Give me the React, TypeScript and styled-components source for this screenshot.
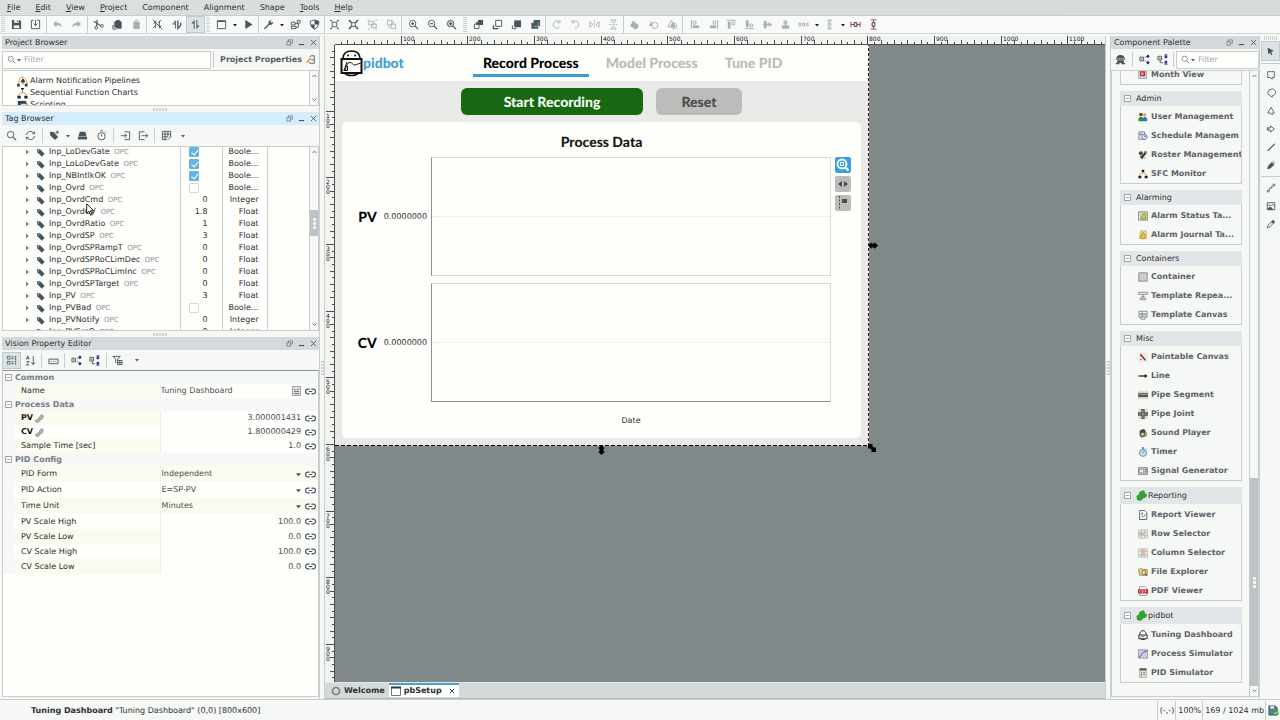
import React, { useLayoutEffect, useRef, useState } from "react";
import styled, { createGlobalStyle, css } from "styled-components";

const ink = "#46565f";
const faded = "#a8aeb1";
const line = "#c9cdce";
const paper = "#f6f8f6";
const white = "#fefefb";

const GlobalStyle = createGlobalStyle`
  * { box-sizing: border-box; }
  body {
    margin: 0;
    background: ${paper};
    color: #2c3033;
    font: 8px/12px "DejaVu Sans", sans-serif;
    text-rendering: geometricPrecision;
  }
  button, input, select { font: inherit; color: inherit; text-rendering: inherit; }
  button { border: 0; padding: 0; background: none; }
  svg { display: block; flex: none; }
  ul { margin: 0; padding: 0; list-style: none; }
`;

/* ---------- icons ---------- */

const glyphs: Record<string, React.ReactNode> = {
  save: <><path d="M1 1h8.500L11 2.500V11H1z" fill="currentColor" stroke="none" /><path d="M3.500 1h5v3.200h-5z" fill="#f6f8f6" stroke="none" /><path d="M3 7h6v3H3z" fill="#f6f8f6" stroke="none" /><path d="M7 1.500v2" /></>,
  pull: <path d="M4 1.500H1.500v9h9v-9H8M6 1v6M4 5l2 2.200L8 5" />,
  undo: <path d="M5 2L1 5.500 5 9V6.800c3-.2 4.800.4 6 2.700C10.700 6 8.500 4.300 5 4.200z" fill="currentColor" stroke="none" />,
  redo: <path d="M7 2l4 3.500L7 9V6.800C4 6.600 2.200 7.200 1 9.500 1.300 6 3.500 4.300 7 4.200z" fill="currentColor" stroke="none" />,
  cut: <><path d="M1 2.500l7.500 5M4.500 1L4 8" strokeWidth="1.300" /><circle cx="3.500" cy="9.500" r="1.500" /><circle cx="9.700" cy="7.500" r="1.500" /></>,
  copy: <><path d="M4 3l1-1.500h3L9 3h1v7H6L3 8V3z" fill="currentColor" /><path d="M1 7v4h4M1 7l3 3" /></>,
  paste: <><path d="M2.500 3h7v8h-7z" fill="currentColor" stroke="none" /><path d="M4.500 2.500V1.300h3v1.200" /></>,
  commOff: <path d="M4 2v8M4 2L2 5M8 10V2M8 10l2-3M1 1l10 10M1 10l3-3M7 4l3-3" />,
  commRead: <><path d="M5 10.500V2L2 5.500h3" /><path d="M7.500 1.500v9l3-3.500V4" strokeWidth="1.400" /></>,
  commFull: <path d="M5 11V1L1.500 5H4v6zM7 1v10l3.500-4H8V1z" fill="currentColor" stroke="none" />,
  frame: <><path d="M1.500 2h9v8.500h-9z" /><path d="M1.500 2.500h9" strokeWidth="1.500" /></>,
  play: <path d="M2.500 1l8 5-8 5z" fill="currentColor" stroke="none" />,
  wrench: <path d="M1 10.300l5-5C5.500 3 7 1 9.500 1.300L8 3l1 1.200L11 3c.2 2.500-1.800 4-4 3.400l-4.800 4.900z" fill="currentColor" stroke="none" />,
  nodes: <path d="M1.500 3.500h4v3h-4zM1.500 8h5v2.500h-5zM8 1.500h3v3H8zM5.500 5h3V4.500M6.500 9H9V5" />,
  shield: <><path d="M6 1l4.700 1.500c0 4-1 6.800-4.700 8.700C2.300 9.300 1.300 6.500 1.300 2.500z" /><path d="M6 1l4.700 1.500c0 1.500 0 2.500-.5 3.500H6zM6 6v5.200C4 10 2.500 8.500 2 6z" fill="currentColor" stroke="none" /></>,
  groupA: <><path d="M3.500 3.500h5v5h-5z" /><path d="M1 1.500h2v1.500M11 1.500H9V3M1 10.500h2V9M11 10.500H9V9" /></>,
  groupB: <><path d="M4 4h4v4H4z" /><path d="M1 1l3 3M11 1L8 4M1 11l3-3M11 11L8 8" strokeWidth="1.600" /></>,
  groupC: <><path d="M2 2.500h5.500v4H2zM5 5.500h5v4H5z" /><path d="M.5 1h2M9 1h2M1 11h2M9 11h2" /></>,
  groupD: <path d="M1.500 1.500h5v5h-5zM5.500 5.500h5v5h-5zM8 2v2M3 8v2" />,
  zoomIn: <><circle cx="5" cy="5" r="3.500" /><path d="M7.700 7.700L11 11M3.500 5h3M5 3.500v3" strokeWidth="1.300" /></>,
  zoomOut: <><circle cx="5" cy="5" r="3.500" /><path d="M7.700 7.700L11 11M3.500 5h3" strokeWidth="1.300" /></>,
  zoomFit: <><circle cx="5" cy="5" r="3.500" fill="currentColor" fillOpacity=".25" /><path d="M7.700 7.700L11 11M3.500 5h3M5 3.500v3" strokeWidth="1.300" /></>,
  forward: <><path d="M5.500 1h5.500v5.500H5.500z" fill="currentColor" stroke="none" /><path d="M1.500 5.500h5v5h-5z" fill="#f6f8f6" /><path d="M3.500 3h3v3.500h-3z" fill="currentColor" stroke="none" /></>,
  backward: <><path d="M4 1.500h6.500V8H4z" /><path d="M1.500 7v3.500H7" strokeWidth="1.500" /></>,
  front: <><path d="M3.500 1.500H11V9H3.500z" fill="currentColor" stroke="none" /><path d="M1.500 7v3.500H6" /></>,
  back: <><path d="M4 1h7v7H9v2.500H1.500V4H4z" fill="currentColor" stroke="none" /><path d="M4 8h5V3.500" stroke="#dfe3e3" strokeWidth=".6" /></>,
  rotL: <path d="M9.500 8.500A4 4 0 1 1 9.500 3.500M9.800 1v3H7" />,
  rotR: <path d="M2.500 3.500a4 4 0 1 1 3 6.500M2.200 1v3h3" />,
  flipH: <><path d="M1 3l3.500 3L1 9zM11 3L7.500 6 11 9z" /><path d="M6 1v10" strokeDasharray="1.500 1" /></>,
  flipV: <><path d="M3 1l3 3.500L9 1zM3 11l3-3.500L9 11z" /><path d="M1 6h10" strokeDasharray="1.500 1" /></>,
  union: <path d="M4.500 1.500l3 3a3.300 3.300 0 1 1-3.500 4.500L1 8z" fill="currentColor" stroke="none" />,
  diff: <><path d="M4 1.500L1 7.500h3.500z" fill="currentColor" stroke="none" /><circle cx="7.500" cy="7" r="3.300" /></>,
  inter: <><path d="M5 1.500L1 8.500h8z" /><circle cx="7.500" cy="7.500" r="3" /><path d="M5 5h3v4H5z" fill="currentColor" stroke="none" /></>,
  alL: <><path d="M1.500 1v10" /><path d="M3 7h7v3H3z" fill="currentColor" stroke="none" /><path d="M3.500 2.500h3v3h-3z" /></>,
  alR: <><path d="M10.500 1v10" /><path d="M2 7h7v3H2z" fill="currentColor" stroke="none" /><path d="M5.500 2.500h3v3h-3z" /></>,
  alT: <><path d="M1 1.500h10" /><path d="M2 3h3v7.500H2z" fill="currentColor" stroke="none" /><path d="M6.500 3.500h3v3h-3z" /></>,
  alB: <><path d="M1 10.500h10" /><path d="M2 1.500h3V9H2z" fill="currentColor" stroke="none" /><path d="M6.500 5.500h3v3h-3z" /></>,
  alM: <><path d="M2 2h3v8H2z" fill="currentColor" stroke="none" /><path d="M6.500 4.500h3v3h-3zM1 6h10" /></>,
  alC: <><path d="M2 7h8v3.500H2z" fill="currentColor" stroke="none" /><path d="M4.500 2.500h3v3h-3zM6 1v10" /></>,
  distH: <path d="M1 4.500h2v3H1zM5 4.500h2v3H5zM9 4.500h2v3H9z" />,
  distV: <path d="M4.500 1h3v2h-3zM4.500 5h3v2h-3zM4.500 9h3v2h-3z" />,
  sameW: <><path d="M1 3v6M11 3v6M1 6h10" stroke="#9a3c44" /><path d="M4.500 4h3v4h-3z" stroke="#333" fill="#f6f8f6" /></>,
  sameH: <><path d="M3 1h6M3 11h6M6 1v10" stroke="#9a3c44" /><path d="M4.500 4h3v4h-3z" stroke="#333" fill="#f6f8f6" /></>,
  search: <><circle cx="5" cy="5" r="3.500" /><path d="M7.700 7.700L11 11" strokeWidth="1.300" /></>,
  refresh: <path d="M1.500 5.500A4.500 4.500 0 0 1 10 4M10.500 1.500V4H8M10.500 6.500A4.500 4.500 0 0 1 2 8M1.500 10.500V8H4" />,
  tag: <><path d="M1 1.500l4.500.3 6 6-3.700 3.700-6-6z" fill="currentColor" stroke="none" /><circle cx="3.200" cy="3.700" r=".7" fill="#fff" stroke="none" /></>,
  tagAdd: <><path d="M1 2l4 .3 5 5.200-3.500 3.500L1.500 6z" fill="currentColor" stroke="none" /><path d="M9 .5v4M7 2.500h4" /></>,
  disk: <><path d="M3 2h6l1.500 5h-9z" fill="currentColor" stroke="none" /><path d="M1 7.500h10v2.800H1z" fill="currentColor" stroke="none" /></>,
  clock: <><circle cx="6" cy="6.800" r="4" /><path d="M4.500 1h3M6 4.500V7M9.500 2l1 1" /></>,
  importI: <path d="M5 2h5.500v8.500H5M1 6.200h6M5 4l2.200 2.200L5 8.500" />,
  exportI: <path d="M7 2H1.500v8.500H7M4 6.200h6.500M8.500 4l2.200 2.200L8.500 8.500" />,
  grid: <path d="M1.500 1.500h9v6M1.500 1.500v9h5M1.500 4.500h9M1.500 7.500h6M4.500 1.500v9M7.500 1.500v6M7.500 10.500l3.500-3.500" />,
  categories: <path d="M1.500 1.500h3v3h-3zM1.500 7h3v3h-3zM6 2h3M6 4h3M6 7.500h3M6 9.500h3M10.500 1v10" strokeDasharray="2 .5" />,
  sortAz: <path d="M1.500 5l1.500-4 1.500 4M2 3.700h2M1.500 7h3l-3 4h3M9 1v9.500M7 8l2 2.500L11 8" />,
  bar: <path d="M1 4.500h10v5H1zM3 7h1M5.500 7h1M8 7h1" />,
  expand: <><path d="M1 3.500h4v4H1zM2 5.500h2M6.500 3.500h1M6.500 7.500h1" /><path d="M9.700 1v3.500M9.700 11V7.500M8.300 3l1.400-2 1.400 2zM8.300 9l1.400 2 1.400-2z" stroke="#20208a" fill="#20208a" /></>,
  collapse: <><path d="M1 2.500h4v4H1zM2 4.500h2M3.500 6.500v3h3" /><path d="M9.700 1v3.500M9.700 11V7.500M8.300 3l1.400 1.500L11.100 3zM8.300 9l1.400-1.500L11.100 9zM8 1h3.400M8 11h3.400" stroke="#20208a" fill="#20208a" /></>,
  filterI: <path d="M1 1.500h8L6 4.500v2M1 1.500l3 3v4M6 6h5v4.500H6zM6 8.200h5M8.500 6v4.500" />,
  link: <path d="M5 3.500H3a2.500 2.500 0 0 0 0 5h2M7 3.500h2a2.500 2.500 0 0 1 0 5H7M4 6h4" strokeWidth="1.300" />,
  puzzle: <><path d="M5.500 1C3 1 1.500 2.500 1.500 4.500h9C10.500 2.500 8.500 1 6.500 1z" fill="currentColor" stroke="none" /><path d="M1 5.500h10M3 7.500h6v1.500H3zM.8 10.500h4M7 10.500h4" strokeWidth="1.400" /></>,
  arrow: <path d="M2 1l8.500 4L7 6.500 8.500 10 7 11 5.500 7.500 3 9.500z" fill="currentColor" stroke="none" />,
  rect: <path d="M2 2h8v7H7.500v2L5 9H2z" />,
  ellipse: <path d="M6 1.500a4 4 0 1 1 1.500 7.700V11L5 9.300A4 4 0 0 1 6 1.500z" />,
  triangle: <path d="M6 1.500L10 8.500H7.500v2L5 8.500H2z" />,
  arrowShape: <path d="M1.500 4.500h4V2.300L10 6 5.500 9.700V7.500h-4zM1.500 6h3" />,
  lineI: <path d="M1.500 10.500l8.500-8.500M2.500 10.800L11 2.500" />,
  pencil: <><path d="M2 10.500L3 7l4-4 2.500 2.500-4 4z" fill="currentColor" /><path d="M8 1.500l2.500 2.500M4 8l3-2" /></>,
  connector: <path d="M1.500 10.500V8.800h2.800V6H7V3.500h3.500v-2H8M1.500 10.500H4" />,
  image: <><path d="M1.500 2h9v8.500h-9zM1.500 6l2-2 2 2 2-2 3 2" /><path d="M2 9l2.500-2.500L8 9v1.500H2z" fill="currentColor" stroke="none" /></>,
  dropper: <><path d="M1.500 10.500l1-3 4-4 2 2-4 4z" /><path d="M6 2.500l1-.5 1.500-1 2.500 2.500-1.500 1.500-.5 1z" fill="currentColor" stroke="none" /></>,
  restore: <path d="M1.500 4.500h6v6h-6zM4 4V1.500h7V7H8" />,
  min: <path d="M1.500 9.500h9" strokeWidth="2" />,
  close: <path d="M1.500 1.500l9 9M10.500 1.500l-9 9" strokeWidth="1.500" />,
};

type IconProps = { name: string; size?: number; color?: string };
const Icon = ({ name, size = 11, color = "currentColor" }: IconProps) => (
  <svg width={size} height={size} viewBox="0 0 12 12" fill="none" stroke="currentColor" strokeWidth="1" color={color} aria-hidden="true">
    {glyphs[name]}
  </svg>
);

const art: Record<string, React.ReactNode> = {
  month: <><path d="M1 0h9v10H1z" fill="#dfe5ee" stroke="#7c8799" /><path d="M2.500 1.500h6v6h-6z" fill="#c4262c" /><path d="M4 3l2.500 3M6.500 3L4 6" stroke="#fff" /></>,
  users: <><circle cx="3.500" cy="3" r="2.200" fill="#6b4a2c" /><circle cx="8" cy="3.500" r="2" fill="#d9a066" /><path d="M.5 11V7.500L3 5.500 6 7v4z" fill="#2f8f3c" /><path d="M5.500 11V7.500L8 5.800 11 7.500V11z" fill="#2e76bd" /></>,
  schedule: <><path d="M1 1h7v9H1z" fill="#d9e6f2" stroke="#6d7f92" /><circle cx="8" cy="7" r="3" fill="#fff" stroke="#3b6ea8" /><path d="M8 5v2h2" stroke="#c33" fill="none" /><path d="M2 3h3v2H2z" fill="#c55" /></>,
  roster: <><circle cx="3.500" cy="4" r="2.500" fill="#4d4d4d" /><circle cx="9" cy="3" r="2" fill="#8a8a8a" /><path d="M2 8l3 3 5-7-2-1-3.500 4z" fill="#333" /><path d="M6 8l4 1-2 2z" fill="#b9bec2" /></>,
  sfc: <><path d="M4.500 1h3v3h-3zM.5 8h3.500v3H.5zM8 8h3.500v3H8z" fill="#222" /><path d="M2 8c0-2.500 2-3 4-3s4 .5 4 3" fill="none" stroke="#e2873c" /></>,
  bellTable: <><path d="M.5 1h11v10H.5z" fill="#d5d9d6" stroke="#787f83" /><path d="M3 8.500c2-1 2-5.500 4.500-5.500S9 7 9 9c-2 1-4 1-6-.5z" fill="#d9c93c" stroke="#4e6a2a" strokeWidth=".7" /></>,
  bellJournal: <><path d="M3 1h7v9H2z" fill="#f1e3b0" stroke="#c5ab62" /><path d="M2 9c2-1 1.500-6 4-6s2.500 4 3 7c-3 1-5 1-7-1z" fill="#e2bc42" stroke="#a9791b" strokeWidth=".7" /></>,
  container: <path d="M1 1h10v10H1z" fill="#cdcfcc" stroke="#777d7f" />,
  repeater: <path d="M.5 1.500h11v2.500H.5zM6 4v4M2.500 8.500h7v2h-7zM4 6.500h4" fill="none" stroke="#797f82" />,
  tcanvas: <path d="M1 1.500h10v3H1zM1 6h10v2.500H1zM3.500 8.500V11h5V8.500M5 1.500v7" fill="none" stroke="#797f82" />,
  paint: <><path d="M.5.500h11v11H.5z" fill="#eee7e1" /><path d="M3 3l6 7" stroke="#333" strokeWidth="1.500" /><path d="M3 3l3 3.500" stroke="#c33" strokeWidth="1.800" /><circle cx="3.500" cy="9" r="1" fill="#c44" /></>,
  line: <><path d="M.5 6h9" stroke="#111" strokeWidth="1.400" /><path d="M8 3.500L11.500 6 8 8.500z" fill="#111" /></>,
  pipe: <><path d="M0 1h12v10H0z" fill="#ddddd6" /><path d="M0 3.500h12v5H0z" fill="#55595a" /><path d="M0 5h12" stroke="#b6b9b9" /></>,
  joint: <><path d="M0 0h12v12H0z" fill="#ddddd6" /><path d="M4 0h4v4h4v4H8v4H4V8H0V4h4z" fill="#50555a" /><path d="M6 1v10M1 6h10" stroke="#a4a8a8" /></>,
  sound: <><path d="M2 3l5-2 2 2v7l-5 1.500L2 9z" fill="#4b4b48" /><circle cx="5.500" cy="7.500" r="2" fill="#d2c36b" /><path d="M9 4c2 1 2 5 0 6.500" stroke="#777" fill="none" /></>,
  timer: <><circle cx="6" cy="7" r="4.300" fill="#bfe0f4" stroke="#4b86ab" /><path d="M4.500 1h3M6 1v2M6 7l2-2.500M9.500 2l1 1" stroke="#365f7a" fill="none" /></>,
  signal: <><path d="M.5 2h11v8H.5z" fill="#c8cbca" stroke="#75797b" /><path d="M2 4h4.500v4H2z" fill="#eef0ee" stroke="#75797b" strokeWidth=".6" /><path d="M8 4.500h2.500M8 7h2.500" stroke="#555" /></>,
  report: <><path d="M2 .5h6l2.500 2.500v8.500H2z" fill="#fff" stroke="#3f4a50" /><path d="M4 3h2v3H4z" fill="#7aa33f" /><path d="M4 9l2-2 1 1 2-3" stroke="#3973ad" fill="none" /></>,
  rowSel: <><path d="M.5 1h11v10H.5zM4 1v10M8 1v10M.5 4h11M.5 8h11" fill="#ececef" stroke="#a9acba" strokeWidth=".8" /><path d="M1 4.500h7v3H1z" fill="#e0b67e" /></>,
  colSel: <><path d="M.5 1h11v10H.5zM4 1v10M8 1v10M.5 4h11M.5 8h11" fill="#ececef" stroke="#a9acba" strokeWidth=".8" /><path d="M4.500 1.500h3v8h-3z" fill="#e3b57a" /></>,
  folder: <><path d="M.5 3l4-1.500 1 1.500H11v7H2z" fill="#e8cf83" stroke="#a58a3c" /><circle cx="7" cy="6.500" r="2.300" fill="#fdf6d8" stroke="#5b5230" /><path d="M8.800 8.300l2 2.500" stroke="#5b5230" strokeWidth="1.300" /></>,
  pdf: <><path d="M2 .5h6l2.500 2.500v8.500H2z" fill="#fff" stroke="#8c8f91" /><path d="M0 4h12v5H0z" fill="#c81f2b" /><path d="M2 8V5.500h1.500M5 5.500V8h1l.5-1.200L6 5.500zM8.500 8V5.500H10M8.500 6.800H10" stroke="#fff" strokeWidth=".7" fill="none" /></>,
  bot: <><path d="M1 6h10v4.500H1zM2 6c0-7 8-7 8 0M3 10.500c1 1.300 5 1.300 6 0" fill="none" stroke="#333" strokeWidth="1.200" /><path d="M3 9c1-3 2 0 5-1.500" stroke="#555" fill="none" /></>,
  curve: <><path d="M.5 1h11v10H.5z" fill="#cfcfe2" stroke="#8e8ea0" /><path d="M1 10c3 0 2.500-7 10-7.500" stroke="#4444a8" fill="none" strokeWidth="1.200" /></>,
  pidSim: <><path d="M2 .5h8v11H2z" fill="#e4e4e0" stroke="#a7aaa8" /><path d="M2 .5h8v2.500H2z" fill="#555" /><path d="M4 5v5M6 5.500h2.500M6 8h2.500" stroke="#6b6b6b" /></>,
  clover: <path d="M5.500 5C3 5 3 1.500 5.500 2 7-.3 10.500 1 9 4c3-.3 3.500 2.700 1.500 3.500C9.500 9.500 7.500 8.500 7 7.500c.5 2.500-.5 4-2.500 3.500-2 .8-4-.7-3-2.500C-.5 6.500 3 4.500 5.500 5z" fill="#37a32f" stroke="#1d7a1c" strokeWidth=".6" />,
  pipeline: <><path d="M2 8c0-9 8-9 9 1" fill="none" stroke="#e08a45" /><path d="M0 8.500h3v3H0zM8.500 8.500h3v3h-3z" fill="#333b42" /><path d="M6.500 3l2 3.500h-4zM6.500 7v2" fill="#30363b" stroke="#30363b" /></>,
  chart: <><path d="M4 0h4L6 3zM.5 8.500H4v3H.5zM8 8.500h3.500v3H8z" fill="#222" /><path d="M6 2v3M2 8.500C2 6 4 5 6 5s4 1 4 3.500" fill="none" stroke="#c9874f" /></>,
  script: <><path d="M1 1h9v9H1z" fill="#24445e" /><path d="M4 4h7v8H4z" fill="#fff" stroke="#555" /><path d="M5 7h5" stroke="#e08a45" strokeWidth="1.500" /></>,
  project: <><path d="M5 2.500L7 1h4v10H5V9.500" fill="none" stroke="#555" strokeWidth="1.200" /><path d="M1 10l5.500-6" stroke="#e0803a" strokeWidth="1.800" /><path d="M7 6.500h4" stroke="#555" /></>,
  database: <><path d="M1 1h7l2 2v8H1z" fill="#5b7f9a" stroke="#34556d" /><path d="M2.500 1h4v3h-4z" fill="#dbe5ea" /><circle cx="8.500" cy="8.500" r="3" fill="#3ba53b" /><path d="M7 8.500l1 1.200L10 7.500" stroke="#fff" fill="none" /></>,
};
const Art = ({ name, size = 10 }: { name: string; size?: number }) => (
  <svg width={size} height={size} viewBox="0 0 12 12" aria-hidden="true">{art[name]}</svg>
);

const Caret = ({ color = "#555d62", size = 4 }: { color?: string; size?: number }) => (
  <svg width={size} height={size} viewBox="0 0 4 4" aria-hidden="true"><path d="M0 1h4L2 3.500z" fill={color} /></svg>
);

/* ---------- shell ---------- */

const Shell = styled.div`
  display: flex;
  flex-direction: column;
  height: 100vh;
  overflow: hidden;
`;
const MenuBar = styled.nav`
  display: flex;
  flex: none;
  gap: 15px;
  height: 16px;
  padding-left: 7px;
  align-items: center;
  background: linear-gradient(90deg, #dbe0dd, #d5dadb);
  border-bottom: 1px solid #c8cdcd;
`;
const MenuItem = styled.button`
  line-height: 12px;
  u { text-underline-offset: 1px; }
`;
const ToolBar = styled.div`
  display: flex;
  flex: none;
  height: 18px;
  background: #f8faf9;
  border-bottom: 1px solid #d3d7d7;
`;
const ToolGroup = styled.div<{ $w: number; $open?: boolean }>`
  display: flex;
  flex: none;
  align-items: center;
  justify-content: center;
  width: ${p => p.$w}px;
  border-right: ${p => (p.$open ? "0" : `1px solid ${line}`)};
`;
const Tool = styled.button<{ $on?: boolean; $off?: boolean; $w?: number; $h?: number }>`
  display: flex;
  flex: none;
  align-items: center;
  justify-content: center;
  width: ${p => p.$w ?? 19}px;
  height: ${p => p.$h ?? 17}px;
  color: ${p => (p.$off ? faded : ink)};
  ${p => p.$on && css`background: #dce3e6; box-shadow: inset 0 0 0 1px #c3cacd;`}
`;
const Grip = styled.span`
  flex: none;
  width: 4px;
  height: 15px;
  margin: 1px;
  background: repeating-linear-gradient(0deg, #cdd1d1 0 1px, transparent 1px 2px);
`;
const Workspace = styled.div`
  display: flex;
  flex: 1;
  min-height: 0;
  padding-top: 2px;
`;

/* ---------- dock panels ---------- */

const LeftDock = styled.aside`
  display: flex;
  flex: none;
  flex-direction: column;
  width: 320px;
  padding: 0 0 2px 2px;
  border-right: 1px solid ${line};
`;
const Panel = styled.section<{ $h?: number }>`
  display: flex;
  flex-direction: column;
  flex: ${p => (p.$h ? `0 0 ${p.$h}px` : "1 1 0")};
  min-width: 0;
  min-height: 0;
`;
const PanelHead = styled.header<{ $active?: boolean }>`
  display: flex;
  flex: none;
  align-items: center;
  height: 13px;
  padding-left: 3px;
  background: ${p => (p.$active ? "#d5ecfa" : "#d4dadb")};
`;
const PanelTitle = styled.h2`
  flex: 1;
  margin: 0;
  font-size: 8px;
  font-weight: 400;
`;
const Splitter = styled.div<{ $vertical?: boolean }>`
  display: flex;
  flex: none;
  align-items: center;
  justify-content: center;
  ${p => (p.$vertical ? "width: 4px;" : "height: 6px;")}
  &::after {
    content: "";
    width: ${p => (p.$vertical ? 3 : 15)}px;
    height: ${p => (p.$vertical ? 15 : 3)}px;
    background: repeating-linear-gradient(${p => (p.$vertical ? 0 : 90)}deg, #cfd3d3 0 2px, transparent 2px 3px);
  }
`;
const PanelHeader = ({ title, active }: { title: string; active?: boolean }) => (
  <PanelHead $active={active}>
    <PanelTitle>{title}</PanelTitle>
    {["restore", "min", "close"].map(n => (
      <Tool key={n} $w={12} $h={12} aria-label={`${n} ${title}`}><Icon name={n} size={7} /></Tool>
    ))}
  </PanelHead>
);

const FilterRow = styled.div`
  display: flex;
  flex: none;
  align-items: center;
  height: 21px;
`;
const FilterBox = styled.label`
  display: flex;
  flex: 1;
  align-items: center;
  gap: 1px;
  min-width: 0;
  height: 18px;
  padding-left: 4px;
  color: #777f84;
  background: ${white};
  border: 1px solid ${line};
`;
const FilterInput = styled.input`
  flex: 1;
  width: 20px;
  min-width: 0;
  margin-left: 2px;
  padding: 0;
  background: none;
  border: 0;
  outline: 0;
  &::placeholder { color: #a9adaf; opacity: 1; }
`;
const ProjectProps = styled.button`
  display: flex;
  gap: 4px;
  align-items: center;
  height: 17px;
  margin-left: 2px;
  padding: 0 4px 0 6px;
  color: #555c60;
  font-weight: 700;
  white-space: nowrap;
  border-left: 1px solid ${line};
`;
const Scrolled = styled.div<{ $lineTop?: string }>`
  display: flex;
  flex: 1;
  min-height: 0;
  overflow: hidden;
  background: ${white};
  border: 1px solid ${line};
  border-top-color: ${p => p.$lineTop ?? line};
`;
const ScrollBar = styled.div`
  display: flex;
  flex: none;
  flex-direction: column;
  align-items: center;
  justify-content: space-between;
  width: 9px;
  padding: 3px 0;
  background: ${paper};
  border-left: 1px solid ${line};
`;
const Thumb = styled.div<{ $h: number; $top: number }>`
  display: flex;
  align-items: center;
  justify-content: center;
  width: 8px;
  height: ${p => p.$h}px;
  margin-top: ${p => p.$top}px;
  margin-bottom: auto;
  background: #bdc2c6;
  &::after {
    content: "";
    width: 3px;
    height: 12px;
    background: repeating-linear-gradient(0deg, #f2f4f4 0 3px, transparent 3px 4px);
  }
`;
const Chevron = ({ down }: { down?: boolean }) => (
  <svg width="5" height="4" viewBox="0 0 5 4" fill="none" stroke="#6d757a" aria-hidden="true">
    <path d={down ? "M.5.5l2 2 2-2" : "M.5 3l2-2 2 2"} />
  </svg>
);
const Scroller = ({ thumb }: { thumb?: [number, number] }) => (
  <ScrollBar>
    <Chevron />
    {thumb && <Thumb $top={thumb[0]} $h={thumb[1]} />}
    <Chevron down />
  </ScrollBar>
);
const Tree = styled.ul`
  flex: 1;
  padding: 4px 0 0 14px;
`;
const TreeRow = styled.li`
  display: flex;
  gap: 2px;
  align-items: center;
  height: 12px;
`;

/* ---------- tag browser ---------- */

const SubBar = styled.div<{ $h: number }>`
  display: flex;
  flex: none;
  align-items: center;
  height: ${p => p.$h}px;
`;
const Divider = styled.span`
  flex: none;
  width: 1px;
  height: 15px;
  margin: 0 2px;
  background: ${line};
`;
const TagArea = styled.div`
  position: relative;
  display: flex;
  flex: 1;
  min-height: 0;
`;
const TagTable = styled.table`
  flex: 1;
  height: max-content;
  margin-top: -1px;
  border-collapse: collapse;
  table-layout: fixed;
  td { height: 12px; padding: 0; line-height: 12px; border-right: 1px solid ${line}; }
  td:last-child { border-right: 0; }
`;
const TagName = styled.div`
  display: flex;
  gap: 4px;
  align-items: center;
  height: 12px;
  padding-left: 22px;
  white-space: nowrap;
  svg:first-child { margin-right: 3px; }
`;
const Source = styled.small`
  margin-left: 2px;
  color: #8d9295;
  font-size: 7px;
`;
const RightCell = styled.td<{ $pad: number }>`
  text-align: right;
  && { padding-right: ${p => p.$pad}px; }
`;
const TagCheck = styled.input`
  appearance: none;
  display: block;
  width: 10px;
  height: 10px;
  margin: 0 0 0 auto;
  background: ${white};
  border: 1px solid #d5d8d8;
  border-radius: 1px;
  &:checked { background: #67b5de; border-color: #67b5de; }
  &:checked::after {
    content: "";
    display: block;
    width: 3px;
    height: 6px;
    margin: 0 0 0 3px;
    border: solid #fff;
    border-width: 0 1px 1px 0;
    transform: rotate(40deg);
  }
`;
const Pointer = styled.svg`
  position: absolute;
  left: 84px;
  top: 57px;
`;

type Tag = [string, string | boolean, string];
const tags: Tag[] = [
  ["Inp_LoDevGate", true, "Boole..."],
  ["Inp_LoLoDevGate", true, "Boole..."],
  ["Inp_NBIntlkOK", true, "Boole..."],
  ["Inp_Ovrd", false, "Boole..."],
  ["Inp_OvrdCmd", "0", "Integer"],
  ["Inp_OvrdCV", "1.8", "Float"],
  ["Inp_OvrdRatio", "1", "Float"],
  ["Inp_OvrdSP", "3", "Float"],
  ["Inp_OvrdSPRampT", "0", "Float"],
  ["Inp_OvrdSPRoCLimDec", "0", "Float"],
  ["Inp_OvrdSPRoCLimInc", "0", "Float"],
  ["Inp_OvrdSPTarget", "0", "Float"],
  ["Inp_PV", "3", "Float"],
  ["Inp_PVBad", false, "Boole..."],
  ["Inp_PVNotify", "0", "Integer"],
  ["Inp_PVSrcQ", "0", "Integer"],
];

/* ---------- property editor ---------- */

const cream = "#fafbee";
const PropTable = styled.table`
  width: 100%;
  height: max-content;
  border-collapse: collapse;
  table-layout: fixed;
  td, th { padding: 0; line-height: 12px; text-align: left; }
`;
const SectionRow = styled.tr`
  height: 13px;
  color: #777d80;
  background: #f5f8f6;
`;
const SectionName = styled.div`
  display: flex;
  gap: 3px;
  align-items: center;
  padding-left: 2px;
`;
const PropRow = styled.tr<{ $h: number; $tint?: boolean; $full?: boolean }>`
  height: ${p => p.$h}px;
  background: ${p => (p.$full ? cream : white)};
  td:first-child { background: #f5f8f6; }
  th { background: ${p => (p.$tint ? cream : white)}; }
  td:nth-child(3) { border-left: 1px solid #eef0ee; }
`;
const PropName = styled.th<{ $bold?: boolean }>`
  && { padding-left: 7px; }
  font-weight: ${p => (p.$bold ? 700 : 400)};
  color: ${p => (p.$bold ? "#111" : "#2c3033")};
`;
const PropLabel = styled.label`
  display: flex;
  gap: 2px;
  align-items: center;
`;
const PropValue = styled.div`
  display: flex;
  align-items: center;
  gap: 4px;
  height: 12px;
  padding-right: 2px;
  color: #4a4f52;
`;
const PropInput = styled.input<{ $num?: boolean }>`
  flex: 1;
  min-width: 0;
  height: 12px;
  padding: 0;
  text-align: ${p => (p.$num ? "right" : "left")};
  background: none;
  border: 0;
  outline: 0;
`;
const PropSelect = styled.select`
  appearance: none;
  flex: 1;
  min-width: 0;
  height: 12px;
  padding: 0 0 0 1px;
  line-height: 12px;
  background: none;
  border: 0;
  outline: 0;
`;
const Toggle = () => (
  <svg width="7" height="7" viewBox="0 0 7 7" fill="#fff" stroke="#9da3a6" aria-hidden="true"><path d="M.5.5h6v6h-6zM2 3.500h3" /></svg>
);
const Memo = () => (
  <svg width="9" height="10" viewBox="0 0 9 10" fill="#dfe1df" stroke="#a0a4a5" aria-hidden="true"><path d="M.5.5h8v9h-8z" /><path d="M2 3.500h1.500M5 3.500h2M2 5.500h5M2 7.500h5" stroke="#777" /></svg>
);
const Chain = () => (
  <svg width="9" height="9" viewBox="0 0 12 12" fill="#b9bcbc" stroke="#888" strokeWidth="1.200" aria-hidden="true">
    <path d="M5.500 6L7 2.500C8 .5 11.500 1 11 3.500L9.500 6.500C9 8 6.500 8 5.500 6z" />
    <path d="M1 8.500L4 6.500c1.500 0 3 1 2.500 2.500L4 11C2 11.700.3 10.200 1 8.500z" />
  </svg>
);

type Prop = { name: string; value: string; kind?: "text" | "select"; bold?: boolean; tint?: boolean };
type Section = { title: string; row: number; props: Prop[] };
const sections: Section[] = [
  { title: "Common", row: 14, props: [{ name: "Name", value: "Tuning Dashboard", kind: "text", tint: true }] },
  { title: "Process Data", row: 14, props: [
    { name: "PV", value: "3.000001431", bold: true, tint: true },
    { name: "CV", value: "1.800000429", bold: true },
    { name: "Sample Time [sec]", value: "1.0", tint: true },
  ] },
  { title: "PID Config", row: 15, props: [
    { name: "PID Form", value: "Independent", kind: "select", tint: true },
    { name: "PID Action", value: "E=SP-PV", kind: "select" },
    { name: "Time Unit", value: "Minutes", kind: "select", tint: true },
    { name: "PV Scale High", value: "100.0" },
    { name: "PV Scale Low", value: "0.0", tint: true },
    { name: "CV Scale High", value: "100.0" },
    { name: "CV Scale Low", value: "0.0", tint: true },
  ] },
];

/* ---------- design canvas ---------- */

const Center = styled.main`
  display: flex;
  flex: 1;
  flex-direction: column;
  min-width: 0;
  border-left: 1px solid ${line};
  border-right: 1px solid ${line};
`;
const CanvasGrid = styled.div`
  display: grid;
  flex: 1;
  grid-template-columns: 10px minmax(0, 1fr);
  grid-template-rows: 9px minmax(0, 1fr);
  min-height: 0;
  overflow: hidden;
  background: #f1f3ef;
`;
const RulerTrack = styled.div<{ $side?: boolean }>`
  grid-column: ${p => (p.$side ? 1 : 2)};
  min-width: 0;
  min-height: 0;
  overflow: hidden;
  ${p => (p.$side ? "border-right" : "border-bottom")}: 1px solid #4c4f50;
`;
const Surface = styled.div`
  position: relative;
  min-height: 0;
  overflow: hidden;
  background: #80888a;
`;

/* Ticks every 10 design pixels at the 2/3 zoom of the canvas, numbered every 100. */
const Ruler = ({ vertical }: { vertical?: boolean }) => {
  const track = useRef<HTMLDivElement>(null);
  const [length, setLength] = useState(0);
  useLayoutEffect(() => {
    const el = track.current!;
    const measure = () => setLength(vertical ? el.clientHeight : el.clientWidth);
    measure();
    const watcher = new ResizeObserver(measure);
    watcher.observe(el);
    return () => watcher.disconnect();
  }, [vertical]);
  const step = 20 / 3;
  const count = Math.floor(length / step);
  const labels = Math.floor((length - 20) / (step * 10));
  return (
    <RulerTrack ref={track} $side={vertical}>
      <svg width={vertical ? 9 : length} height={vertical ? length : 8} stroke="#4c4f50" aria-hidden="true">
        {Array.from({ length: count }, (_, i) => i + 1).map(i => {
          const at = Math.round(i * step) - 0.5;
          const size = i % 10 === 0 ? 8 : i % 2 === 0 ? 4 : 2;
          return vertical
            ? <path key={i} d={`M${9 - size} ${at}h${size}`} />
            : <path key={i} d={`M${at} ${8 - size}v${size}`} />;
        })}
        {Array.from({ length: Math.max(0, labels) }, (_, i) => (i + 1) * 100).map(n => {
          const at = Math.round((n / 10) * step);
          return vertical
            ? String(n).split("").map((c, k) => (
              <text key={`${n}-${k}`} x="1" y={at + 6 + k * 5} fontSize="6" stroke="none" fill="#222">{c}</text>
            ))
            : <text key={n} x={at + 1} y="5" fontSize="6" stroke="none" fill="#222">{n}</text>;
        })}
      </svg>
    </RulerTrack>
  );
};
const DesignWindow = styled.article`
  position: relative;
  width: 534px;
  height: 401px;
  display: flex;
  flex-direction: column;
  background: #e9eae7;
  font-family: Lato, sans-serif;
  &::before, &::after { content: ""; position: absolute; }
  &::before {
    right: 0; top: 0; bottom: 0; width: 1px;
    background: repeating-linear-gradient(0deg, #222 0 3px, #f4f4f4 3px 5px);
  }
  &::after {
    left: 0; right: 0; bottom: 0; height: 1px;
    background: repeating-linear-gradient(90deg, #000 0 4px, #d9dcd4 4px 6px);
  }
`;
const WindowHead = styled.header`
  display: flex;
  flex: none;
  align-items: center;
  height: 36px;
  padding-left: 5px;
  background: ${white};
`;
const Brand = styled.div`
  display: flex;
  align-items: center;
  width: 133px;
  color: #3f9fd8;
  font-size: 14px;
  font-weight: 900;
  line-height: 20px;
`;
const WindowTab = styled.button<{ $on?: boolean }>`
  height: 27px;
  margin-right: 7px;
  padding: 2px 10px 0;
  color: ${p => (p.$on ? "#000" : "#babbba")};
  font-size: 14px;
  font-weight: 900;
  line-height: 18px;
  white-space: nowrap;
  border-bottom: 3px solid ${p => (p.$on ? "#3c9ad6" : "transparent")};
`;
const WindowBody = styled.div`
  display: flex;
  flex: 1;
  flex-direction: column;
  gap: 7px;
  padding: 7px 8px 8px 7px;
`;
const Actions = styled.div`
  display: flex;
  gap: 13px;
  justify-content: center;
`;
const Action = styled.button<{ $primary?: boolean }>`
  width: ${p => (p.$primary ? 182 : 86)}px;
  height: 27px;
  color: ${p => (p.$primary ? "#f4fbf2" : "#4b4b49")};
  font-size: 14px;
  font-weight: 900;
  background: ${p => (p.$primary ? "#176713" : "#bcbdba")};
  border-radius: 6px;
`;
const Card = styled.section`
  flex: 1;
  padding-top: 10px;
  background: ${white};
  border-radius: 5px;
`;
const CardTitle = styled.h3`
  height: 25px;
  margin: 0;
  font-size: 14px;
  font-weight: 900;
  line-height: 20px;
  text-align: center;
  color: #1a1a1a;
`;
const ChartGrid = styled.div`
  display: grid;
  grid-template-columns: 89px 400px 1fr;
  row-gap: 7px;
`;
const AxisName = styled.div`
  display: flex;
  gap: 7px;
  align-items: center;
  justify-content: flex-end;
  padding-right: 4px;
  strong { font-size: 14px; font-weight: 900; color: #000; }
  span { font-family: "DejaVu Sans", sans-serif; }
`;
const Plot = styled.div<{ $last?: boolean }>`
  display: flex;
  align-items: center;
  height: 119px;
  border: 1px solid #d9dad8;
  border-left-color: #8e908f;
  ${p => p.$last && css`border-bottom-color: #8e908f;`}
  &::after { content: ""; width: 100%; border-top: 1px dotted #e3e4e1; }
`;
const PlotTools = styled.div`
  display: flex;
  flex-direction: column;
  gap: 3px;
  padding-left: 4px;
`;
const PlotTool = styled.button<{ $on?: boolean }>`
  width: 16px;
  height: 16px;
  background: ${p => (p.$on ? "#3c9fdb" : "#bcbdba")};
  border-radius: 2px;
`;
const AxisTitle = styled.p`
  grid-column: 2;
  margin: 6px 0 0;
  font-family: "DejaVu Sans", sans-serif;
  text-align: center;
`;
const Handle = styled.svg<{ $x: number; $y: number }>`
  position: absolute;
  left: ${p => p.$x}px;
  top: ${p => p.$y}px;
`;
const DocTabs = styled.div`
  display: flex;
  flex: none;
  height: 17px;
  padding: 0 0 1px 4px;
  background: #d4d9da;
  border-top: 1px solid #e4e8e8;
  border-bottom: 1px solid #b5babb;
`;
const DocTab = styled.button<{ $on?: boolean }>`
  display: flex;
  gap: 3px;
  align-items: center;
  padding: 0 4px 0 2px;
  font-weight: 700;
  background: ${p => (p.$on ? white : "none")};
  border-top: 2px solid ${p => (p.$on ? "#4b9fcf" : "transparent")};
  svg:last-child { margin-left: 4px; }
`;

/* ---------- palette ---------- */

const PaletteDock = styled.aside`
  display: flex;
  flex: none;
  width: 150px;
  padding-bottom: 2px;
  border-left: 1px solid ${line};
  border-right: 1px solid ${line};
`;
const PaletteList = styled.div`
  display: flex;
  flex: 1;
  flex-direction: column;
  gap: 6px;
  min-width: 0;
  margin-top: -7px;
  padding: 0 7px 0 8px;
  background: ${paper};
`;
const GroupHead = styled.h3<{ $badge?: boolean }>`
  display: flex;
  gap: 5px;
  align-items: center;
  height: ${p => (p.$badge ? 17 : 15)}px;
  margin: 0;
  padding-left: 4px;
  font-size: 8px;
  font-weight: 400;
  background: #e3e6e8;
  svg + svg { margin-right: -4px; }
`;
const GroupBody = styled.ul`
  padding-top: 1px;
  border: 1px solid ${line};
  border-top: 0;
`;
const PaletteItem = styled.li`
  display: flex;
  gap: 3px;
  align-items: center;
  height: 19px;
  padding-left: 17px;
  overflow: hidden;
  color: #5d6366;
  font-weight: 700;
  white-space: nowrap;
`;
const palette: [string, boolean, [string, string][]][] = [
  ["", false, [["month", "Month View"]]],
  ["Admin", false, [["users", "User Management"], ["schedule", "Schedule Managem"], ["roster", "Roster Management"], ["sfc", "SFC Monitor"]]],
  ["Alarming", false, [["bellTable", "Alarm Status Ta..."], ["bellJournal", "Alarm Journal Ta..."]]],
  ["Containers", false, [["container", "Container"], ["repeater", "Template Repea..."], ["tcanvas", "Template Canvas"]]],
  ["Misc", false, [["paint", "Paintable Canvas"], ["line", "Line"], ["pipe", "Pipe Segment"], ["joint", "Pipe Joint"], ["sound", "Sound Player"], ["timer", "Timer"], ["signal", "Signal Generator"]]],
  ["Reporting", true, [["report", "Report Viewer"], ["rowSel", "Row Selector"], ["colSel", "Column Selector"], ["folder", "File Explorer"], ["pdf", "PDF Viewer"]]],
  ["pidbot", true, [["bot", "Tuning Dashboard"], ["curve", "Process Simulator"], ["pidSim", "PID Simulator"]]],
];

const ShapeStrip = styled.div`
  display: flex;
  flex: none;
  flex-direction: column;
  align-items: center;
  width: 20px;
  padding-left: 1px;
`;
const StripGrip = styled.span`
  width: 14px;
  height: 4px;
  margin-bottom: 1px;
  background: repeating-linear-gradient(90deg, #cdd1d1 0 1px, transparent 1px 2px);
`;
const StripRule = styled.span`
  width: 100%;
  height: 1px;
  margin: 2px 0;
  background: ${line};
`;

const StatusBar = styled.footer`
  display: flex;
  flex: none;
  align-items: center;
  height: 21px;
  padding: 1px 0 0 31px;
  border-top: 1px solid ${line};
`;
const StatusText = styled.span`
  flex: 1;
`;
const StatusCell = styled.span`
  display: flex;
  align-items: center;
  height: 19px;
  padding: 0 1px 0 2px;
  border-left: 1px solid ${line};
`;

/* ---------- toolbar data ---------- */

const menus = ["_File", "_Edit", "_View", "_Project", "Component", "Alignment", "Shape", "_Tools", "_Help"];

type Entry = { i?: string; off?: boolean; on?: boolean };
type Group = { w: number; tool?: number; open?: boolean; grip?: boolean; items: Entry[] };
const on = (...names: string[]): Entry[] => names.map(i => ({ i }));
const off = (...names: string[]): Entry[] => names.map(i => ({ i, off: true }));
const drop: Entry = {};
const toolGroups: Group[] = [
  { w: 41, grip: true, items: on("save", "pull") },
  { w: 41, items: off("undo", "redo") },
  { w: 59, items: [...on("cut", "copy"), ...off("paste")] },
  { w: 58, open: true, items: [...on("commOff", "commRead"), { i: "commFull", on: true }] },
  { w: 48, grip: true, items: [...on("frame"), drop, ...on("play")] },
  { w: 66, items: [...on("wrench"), drop, ...on("nodes", "shield")] },
  { w: 77, items: [...on("groupA", "groupB"), ...off("groupC", "groupD")] },
  { w: 60, open: true, items: on("zoomIn", "zoomOut", "zoomFit") },
  { w: 78, grip: true, items: on("forward", "backward", "front", "back") },
  { w: 78, items: off("rotL", "rotR", "flipH", "flipV") },
  { w: 59, items: off("union", "diff", "inter") },
  { w: 203, tool: 18, open: true, items: [...off("alL", "alR", "alT", "alB", "alM", "alC", "distH"), drop, ...off("distV"), drop, ...on("sameW", "sameH")] },
];

const Bot = () => (
  <svg width="23" height="28" viewBox="0 0 23 28" fill="none" stroke="#111" strokeWidth="2" aria-hidden="true">
    <path d="M3 10C3 4 6.500 2 11.500 2S20 4 20 10" strokeWidth="1.600" />
    <path d="M1.500 10h20v14h-20z" />
    <path d="M5 24.500c2.500 2.700 10.500 2.700 13 0" strokeWidth="1.600" />
    <circle cx="8" cy="6.500" r="1" fill="#111" stroke="none" />
    <circle cx="15" cy="6.500" r="1" fill="#111" stroke="none" />
    <path d="M4 21.500l3-8.500M5 22c1.500-5 2-8.500 5-8.500s2.500 3 5 2.500 3-1.500 5.500-1.500M3.500 21.500h4V17" strokeWidth="1" />
  </svg>
);

export default function App() {
  return (
    <Shell>
      <GlobalStyle />
      <MenuBar>
        {menus.map(m => (
          <MenuItem key={m}>{m[0] === "_" ? <><u>{m[1]}</u>{m.slice(2)}</> : m}</MenuItem>
        ))}
      </MenuBar>
      <ToolBar>
        {toolGroups.map((g, gi) => (
          <React.Fragment key={gi}>
            {g.grip && <Grip />}
            <ToolGroup $w={g.w} $open={g.open}>
              {g.items.map((t, k) =>
                t.i
                  ? <Tool key={k} $w={g.tool} $on={t.on} $off={t.off} aria-label={t.i}><Icon name={t.i} /></Tool>
                  : <Tool key={k} $w={8} aria-label="More"><Caret color="#222" /></Tool>
              )}
            </ToolGroup>
          </React.Fragment>
        ))}
      </ToolBar>

      <Workspace>
        <LeftDock>
          <Panel $h={70}>
            <PanelHeader title="Project Browser" />
            <FilterRow>
              <FilterBox>
                <Icon name="search" size={9} /><Caret />
                <FilterInput placeholder="Filter" aria-label="Filter project" />
              </FilterBox>
              <ProjectProps>Project Properties <Art name="project" size={9} /></ProjectProps>
            </FilterRow>
            <Scrolled>
              <Tree>
                <TreeRow><Art name="pipeline" size={11} />Alarm Notification Pipelines</TreeRow>
                <TreeRow><Art name="chart" size={11} />Sequential Function Charts</TreeRow>
                <TreeRow><Art name="script" size={11} />Scripting</TreeRow>
              </Tree>
              <Scroller />
            </Scrolled>
          </Panel>
          <Splitter />
          <Panel $h={219}>
            <PanelHeader title="Tag Browser" active />
            <SubBar $h={21}>
              <Tool aria-label="Search"><Icon name="search" /></Tool>
              <Tool aria-label="Refresh"><Icon name="refresh" /></Tool>
              <Divider />
              <Tool $w={18} aria-label="Add tag"><Icon name="tagAdd" /></Tool>
              <Tool $w={10} aria-label="Tag options"><Caret /></Tool>
              <Tool aria-label="Providers"><Icon name="disk" /></Tool>
              <Tool aria-label="Tag groups"><Icon name="clock" /></Tool>
              <Divider />
              <Tool $w={18} aria-label="Import"><Icon name="importI" /></Tool>
              <Tool $w={18} aria-label="Export"><Icon name="exportI" /></Tool>
              <Divider />
              <Tool $w={18} aria-label="Columns"><Icon name="grid" /></Tool>
              <Tool $w={15} aria-label="Column options"><Caret /></Tool>
            </SubBar>
            <TagArea>
              <Scrolled>
                <TagTable>
                  <colgroup><col style={{ width: 177 }} /><col style={{ width: 42 }} /><col style={{ width: 45 }} /><col /></colgroup>
                  <tbody>
                    {tags.map(([name, value, type]) => (
                      <tr key={name}>
                        <td>
                          <TagName>
                            <svg width="4" height="6" viewBox="0 0 4 6" aria-hidden="true"><path d="M1 .5L4 3 1 5.500z" fill="#7b8388" /></svg>
                            <Icon name="tag" size={9} color={ink} />
                            <span>{name} <Source>OPC</Source></span>
                          </TagName>
                        </td>
                        {typeof value === "string"
                          ? <RightCell $pad={14}>{value}</RightCell>
                          : <RightCell $pad={23}><TagCheck type="checkbox" defaultChecked={value} aria-label={name} /></RightCell>}
                        <RightCell $pad={8}>{type}</RightCell>
                        <td />
                      </tr>
                    ))}
                  </tbody>
                </TagTable>
                <Scroller thumb={[56, 26]} />
              </Scrolled>
              <Pointer width="9" height="13" viewBox="0 0 9 13" aria-hidden="true">
                <path d="M.7.800v9.500l2.300-2 1.700 4 1.500-.7-1.700-3.800h3.200z" fill="#fff" stroke="#222" />
              </Pointer>
            </TagArea>
          </Panel>
          <Splitter />
          <Panel>
            <PanelHeader title="Vision Property Editor" />
            <SubBar $h={20}>
              <Tool $on aria-label="Categorize"><Icon name="categories" /></Tool>
              <Tool $w={18} aria-label="Sort"><Icon name="sortAz" /></Tool>
              <Divider />
              <Tool $w={18} aria-label="Description"><Icon name="bar" /></Tool>
              <Divider />
              <Tool $w={18} aria-label="Expand"><Icon name="expand" /></Tool>
              <Tool aria-label="Collapse"><Icon name="collapse" /></Tool>
              <Divider />
              <Tool $w={16} aria-label="Filter"><Icon name="filterI" /></Tool>
              <Tool $w={24} aria-label="Filter options"><Caret /></Tool>
            </SubBar>
            <Scrolled $lineTop="#8f9698">
              <PropTable>
                <colgroup><col style={{ width: 11 }} /><col style={{ width: 146 }} /><col /></colgroup>
                <tbody>
                  {sections.map(s => (
                    <React.Fragment key={s.title}>
                      <SectionRow>
                        <th colSpan={3}><SectionName><Toggle />{s.title}</SectionName></th>
                      </SectionRow>
                      {s.props.map(p => {
                        const id = p.name.toLowerCase().replace(/\W+/g, "-");
                        return (
                          <PropRow key={p.name} $h={p.kind === "select" ? 16 : s.row} $tint={p.tint} $full={p.tint && p.kind === "select"}>
                            <td />
                            <PropName $bold={p.bold}><PropLabel htmlFor={id}>{p.name}{p.bold && <Chain />}</PropLabel></PropName>
                            <td>
                              <PropValue>
                                {p.kind === "select"
                                  ? <><PropSelect id={id}><option>{p.value}</option></PropSelect><Caret size={5} /></>
                                  : <PropInput id={id} $num={!p.kind} defaultValue={p.value} />}
                                {p.kind === "text" && <Memo />}
                                <Icon name="link" size={11} color={ink} />
                              </PropValue>
                            </td>
                          </PropRow>
                        );
                      })}
                    </React.Fragment>
                  ))}
                </tbody>
              </PropTable>
            </Scrolled>
          </Panel>
        </LeftDock>
        <Splitter $vertical />

        <Center>
          <CanvasGrid>
            <Ruler />
            <Ruler vertical />
            <Surface>
              <DesignWindow>
                <WindowHead>
                  <Brand><Bot />pidbot</Brand>
                  <WindowTab $on>Record Process</WindowTab>
                  <WindowTab>Model Process</WindowTab>
                  <WindowTab>Tune PID</WindowTab>
                </WindowHead>
                <WindowBody>
                  <Actions>
                    <Action $primary>Start Recording</Action>
                    <Action>Reset</Action>
                  </Actions>
                  <Card>
                    <CardTitle>Process Data</CardTitle>
                    <ChartGrid>
                      <AxisName><strong>PV</strong><span>0.0000000</span></AxisName>
                      <Plot />
                      <PlotTools>
                        <PlotTool $on aria-label="Zoom mode">
                          <svg width="16" height="16" viewBox="0 0 16 16" fill="none" stroke="#fff"><circle cx="7" cy="7" r="4.500" strokeWidth="1.800" /><path d="M5.500 5.500h3v3h-3z" /><path d="M10.500 10.500l3 3" strokeWidth="2.200" /></svg>
                        </PlotTool>
                        <PlotTool aria-label="Pan mode">
                          <svg width="16" height="16" viewBox="0 0 16 16" fill="#4b4b49"><path d="M7 5v6L3 8zM9 5l4 3-4 3z" /></svg>
                        </PlotTool>
                        <PlotTool aria-label="Mark mode">
                          <svg width="16" height="16" viewBox="0 0 16 16" fill="#4b4b49"><path d="M7 4h5v4H7z" /><path d="M4.500 1v14" stroke="#4b4b49" strokeDasharray="2 1.500" /></svg>
                        </PlotTool>
                      </PlotTools>
                      <AxisName><strong>CV</strong><span>0.0000000</span></AxisName>
                      <Plot $last />
                      <AxisTitle>Date</AxisTitle>
                    </ChartGrid>
                  </Card>
                </WindowBody>
              </DesignWindow>
              <Handle $x={263} $y={400} width="7" height="10" viewBox="0 0 7 10" aria-hidden="true"><path d="M3.500 0L7 3.500H5.500v3H7L3.500 10 0 6.500h1.500v-3H0z" /></Handle>
              <Handle $x={533} $y={197} width="10" height="7" viewBox="0 0 10 7" aria-hidden="true"><path d="M0 3.500L3.500 0v1.500h3V0L10 3.500 6.500 7V5.500h-3V7z" /></Handle>
              <Handle $x={533} $y={399} width="8" height="8" viewBox="0 0 8 8" aria-hidden="true"><path d="M0 0h5L4 1.500 6.500 4 8 3v5H3l1-1.500L1.500 4 0 5z" /></Handle>
            </Surface>
          </CanvasGrid>
          <DocTabs>
            <DocTab>
              <svg width="10" height="10" viewBox="0 0 10 10" fill="none" stroke="#6f7f8b" strokeWidth="1.600" aria-hidden="true"><circle cx="5" cy="5" r="3.500" /></svg>
              <span>Welcome</span>
            </DocTab>
            <DocTab $on>
              <svg width="10" height="10" viewBox="0 0 10 10" fill="#fff" stroke="#777" aria-hidden="true"><path d="M.5 1.500h9v8h-9z" /><path d="M0 1.500h10" stroke="#333" strokeWidth="2" /></svg>
              <span>pbSetup</span>
              <Icon name="close" size={6} color="#111" />
            </DocTab>
          </DocTabs>
        </Center>
        <Splitter $vertical />

        <PaletteDock>
          <Panel>
            <PanelHeader title="Component Palette" />
            <FilterRow>
              <Tool aria-label="Components"><Icon name="puzzle" /></Tool>
              <Divider />
              <Tool $w={18} aria-label="Expand all"><Icon name="expand" /></Tool>
              <Tool $w={18} aria-label="Collapse all"><Icon name="collapse" /></Tool>
              <Divider />
              <FilterBox>
                <Icon name="search" size={9} /><Caret />
                <FilterInput placeholder="Filter" aria-label="Filter components" />
              </FilterBox>
            </FilterRow>
            <Scrolled>
              <PaletteList>
                {palette.map(([title, badge, items]) => (
                  <section key={title}>
                    {title && <GroupHead $badge={badge}><Toggle />{badge && <Art name="clover" size={11} />}{title}</GroupHead>}
                    <GroupBody>
                      {items.map(([icon, label]) => <PaletteItem key={label}><Art name={icon} />{label}</PaletteItem>)}
                    </GroupBody>
                  </section>
                ))}
              </PaletteList>
              <Scroller thumb={[400, 208]} />
            </Scrolled>
          </Panel>
        </PaletteDock>
        <ShapeStrip>
          <StripGrip />
          <Tool $on $h={20} aria-label="Select"><Icon name="arrow" size={9} /></Tool>
          <StripRule />
          {["rect", "ellipse", "triangle", "arrowShape", "lineI", "pencil"].map(n => (
            <Tool key={n} $h={18} aria-label={n}><Icon name={n} size={10} /></Tool>
          ))}
          <StripRule />
          {["connector", "image", "dropper"].map(n => (
            <Tool key={n} $h={18} aria-label={n}><Icon name={n} size={10} /></Tool>
          ))}
        </ShapeStrip>
      </Workspace>

      <StatusBar>
        <StatusText><b>Tuning Dashboard</b> "Tuning Dashboard" (0,0) [800x600]</StatusText>
        <StatusCell>(-,-)</StatusCell>
        <StatusCell>100%</StatusCell>
        <StatusCell>169 / 1024 mb</StatusCell>
        <StatusCell><Art name="database" size={11} /></StatusCell>
      </StatusBar>
    </Shell>
  );
}
